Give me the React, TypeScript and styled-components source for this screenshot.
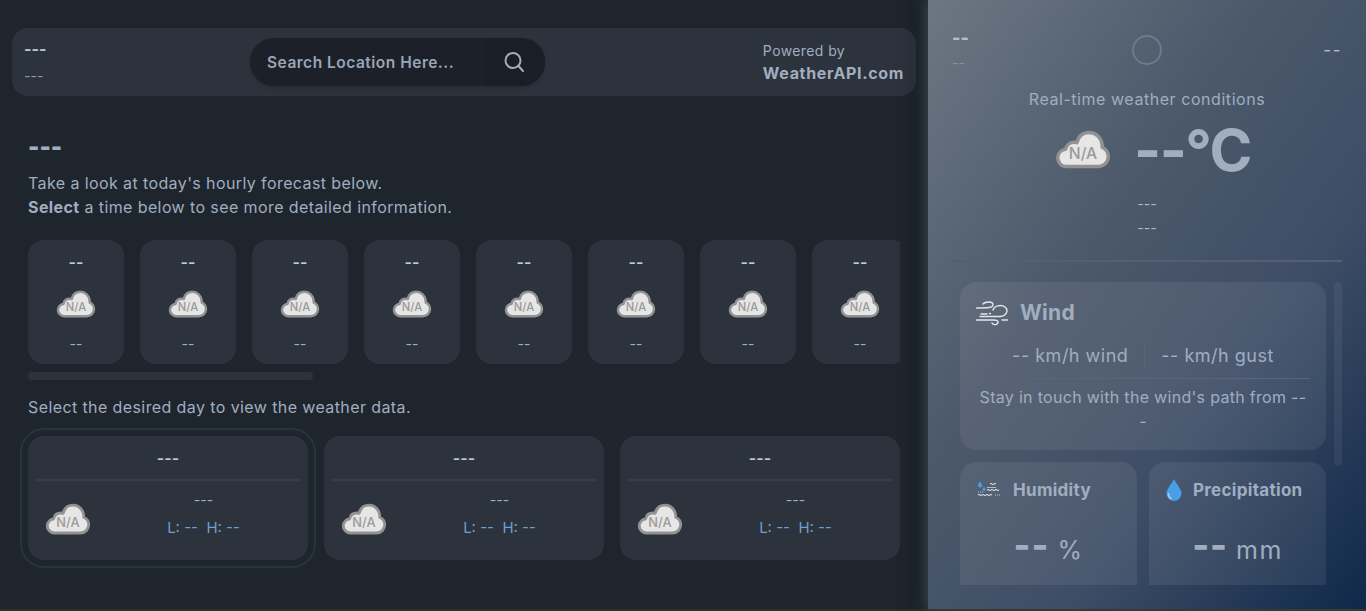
import React from 'react';
import styled, { createGlobalStyle } from 'styled-components';

const Global = createGlobalStyle`
  html, body { margin: 0; padding: 0; height: 100%; background: #273327; overflow: hidden; }
  #root { height: 100%; }
  * { box-sizing: border-box; }
`;

const Page = styled.div`
  display: flex;
  height: 609px;
  font-family: Inter, "Liberation Sans", sans-serif;
  color: #a0aec0;
`;

const Main = styled.main`
  width: 928px;
  flex: none;
  background: #1e252d;
  padding: 28px 12px 0;
`;

const TopBar = styled.header`
  width: 904px;
  height: 68px;
  display: grid;
  grid-template-columns: 226px 295px 1fr;
  align-items: center;
  padding: 0 12px;
  background: #2d333c;
  border-radius: 16px;
`;

const Place = styled.div`
  display: flex;
  flex-direction: column;
  gap: 8px;
`;

const PlaceName = styled.span`
  font-size: 16px;
  line-height: 20px;
  font-weight: 700;
  color: #b9c2d0;
`;

const PlaceSub = styled.span`
  font-size: 14px;
  line-height: 18px;
  color: #8d99aa;
`;

const Search = styled.div`
  height: 48px;
  display: flex;
  background: #1c2129;
  border-radius: 24px;
  overflow: hidden;
  box-shadow: 0 2px 4px rgba(0, 0, 0, 0.15);
`;

const SearchText = styled.span`
  flex: 1;
  display: flex;
  align-items: center;
  padding-left: 17px;
  font-size: 15.5px;
  font-weight: 600;
  letter-spacing: 0.5px;
  color: #9aa6b6;
`;

const SearchButton = styled.span`
  width: 60px;
  display: flex;
  align-items: center;
  justify-content: center;
  padding-right: 2px;
  background: #1a1e26;
  color: #a4adba;
`;

const Powered = styled.div`
  justify-self: end;
  display: flex;
  flex-direction: column;
  font-size: 14px;
  line-height: 22px;
  letter-spacing: 0.4px;
  color: #a0aec0;
`;

const PoweredBrand = styled.strong`
  font-size: 16px;
  font-weight: 700;
  letter-spacing: 0.65px;
`;

const Intro = styled.section`
  padding: 39px 16px 0;
`;

const Headline = styled.h1`
  margin: 0 0 12px;
  height: 24px;
  font-size: 24px;
  line-height: 24px;
  font-weight: 900;
  color: #a0aec0;
`;

const Lead = styled.p`
  margin: 0;
  font-size: 16px;
  line-height: 24px;
  letter-spacing: 0.4px;
  color: #a0aec0;
  b { font-weight: 700; }
`;

const Hours = styled.div`
  display: flex;
  gap: 16px;
  margin-top: 21px;
  width: 872px;
  overflow-x: auto;
  scrollbar-width: none;
`;

const HourThumb = styled.div`
  width: 285px;
  height: 8px;
  margin-top: 8px;
  background: #2d333c;
  border-radius: 4px;
`;

const HourCard = styled.div`
  flex: none;
  width: 96px;
  height: 124px;
  display: flex;
  flex-direction: column;
  align-items: center;
  padding-top: 12px;
  background: #2d333c;
  border-radius: 16px;
`;

const HourTop = styled.span`
  font-size: 16px;
  line-height: 20px;
  font-weight: 600;
  color: #c0c8d4;
`;

const HourIcon = styled.span`
  margin: 18px 0 16px;
  height: 28px;
  display: flex;
`;

const HourBottom = styled.span`
  font-size: 14px;
  line-height: 20px;
  color: #a0aec0;
`;

const DayPrompt = styled.p`
  margin: 15px 0 0;
  font-size: 16px;
  line-height: 24px;
  letter-spacing: 0.4px;
  color: #a0aec0;
`;

const Days = styled.div`
  display: grid;
  grid-template-columns: repeat(3, 280px);
  gap: 16px;
  margin-top: 17px;
`;

const DayCard = styled.div<{ $active?: boolean }>`
  height: 124px;
  padding: 0 8px;
  background: #2d333c;
  border-radius: 16px;
  outline: ${(p) => (p.$active ? '2px solid #2a323d' : 'none')};
  outline-offset: 6px;
`;

const DayName = styled.div`
  height: 45px;
  display: flex;
  align-items: center;
  justify-content: center;
  font-size: 16px;
  font-weight: 600;
  color: #c0c8d4;
  border-bottom: 2px solid #383e47;
`;

const DayBody = styled.div`
  display: flex;
  align-items: center;
  height: 77px;
  padding-left: 9px;
`;

const DayInfo = styled.div`
  flex: 1;
  display: flex;
  flex-direction: column;
  align-items: center;
  padding: 0 6px 12px 22px;
`;

const DayCond = styled.span`
  font-size: 14px;
  line-height: 20px;
  color: #a0aec0;
`;

const HighLow = styled.span`
  margin-top: 8px;
  font-size: 15px;
  line-height: 20px;
  white-space: pre;
  color: #6f9fd0;
`;

const Side = styled.aside`
  position: relative;
  flex: 1;
  padding: 20px 24px 0;
  background: linear-gradient(to bottom right, #6b7782 0%, #4c596b 38%, #3e4d66 66%, #0f2849 100%);
  box-shadow: -2px 0 12px rgba(90, 105, 120, 0.55), -14px 0 18px rgba(0, 0, 0, 0.15);
`;

const SideTop = styled.div`
  display: grid;
  grid-template-columns: 1fr 32px 1fr;
  align-items: center;
  height: 60px;
`;

const ClockCol = styled.div`
  display: flex;
  flex-direction: column;
  gap: 6px;
  align-self: start;
  padding-top: 8px;
`;

const ClockTop = styled.span`
  font-size: 18px;
  line-height: 20px;
  font-weight: 800;
  color: #b4bdcb;
`;

const ClockSub = styled.span`
  font-size: 14px;
  line-height: 18px;
  color: #8894a3;
`;

const Ring = styled.span`
  width: 30px;
  height: 30px;
  justify-self: center;
  border: 2px solid #6c7a8b;
  border-radius: 50%;
`;

const Corner = styled.span`
  justify-self: end;
  font-size: 17px;
  letter-spacing: 1.5px;
  color: #b4bdcb;
`;

const Realtime = styled.p`
  margin: 9px 0 0;
  text-align: center;
  font-size: 16px;
  line-height: 20px;
  letter-spacing: 0.55px;
  color: #a0aec0;
`;

const NowRow = styled.div`
  display: flex;
  align-items: center;
  justify-content: center;
  gap: 23px;
  height: 62px;
  margin-top: 10px;
  padding-left: 12px;
`;

const NowTemp = styled.span`
  font-size: 58px;
  line-height: 62px;
  font-weight: 700;
  letter-spacing: -1.5px;
  color: #a0aec0;
`;

const NowLine = styled.div`
  text-align: center;
  font-size: 14px;
  line-height: 24px;
  color: #b0bac8;
`;

const NowBlock = styled.div`
  margin-top: 11px;
  padding-bottom: 20px;
  border-bottom: 2px solid #535f72;
`;

const DetailsFrame = styled.div`
  position: relative;
  margin-top: 20px;
`;

const Details = styled.div`
  height: 303px;
  padding-left: 8px;
  overflow-y: auto;
  scrollbar-width: none;
`;

const DetailThumb = styled.span`
  position: absolute;
  top: 0;
  right: 0;
  width: 8px;
  height: 184px;
  background: rgba(255, 255, 255, 0.06);
  border-radius: 4px;
`;

const DetailGrid = styled.div`
  display: grid;
  grid-template-columns: 177px 177px;
  gap: 12px;
  width: 366px;
`;

const Card = styled.div<{ $wide?: boolean }>`
  grid-column: ${(p) => (p.$wide ? 'span 2' : 'auto')};
  height: ${(p) => (p.$wide ? '168px' : '153px')};
  padding: ${(p) => (p.$wide ? '16px 16px' : '14px 16px')};
  background: rgba(255, 255, 255, 0.07);
  border-radius: 16px;
`;

const CardHead = styled.div<{ $gap: number }>`
  display: flex;
  align-items: center;
  gap: ${(p) => p.$gap}px;
`;

const WindTitle = styled.h2`
  margin: 0;
  font-size: 21px;
  line-height: 30px;
  font-weight: 700;
  letter-spacing: 0.3px;
  color: #a0aec0;
`;

const SmallTitle = styled.h2`
  margin: 0;
  font-size: 17px;
  line-height: 28px;
  font-weight: 700;
  letter-spacing: 0.3px;
  color: #a0aec0;
`;

const WindStats = styled.div`
  display: flex;
  justify-content: center;
  align-items: center;
  margin-top: 14px;
  padding-bottom: 8px;
  border-bottom: 1px solid #5a6678;
  font-size: 18px;
  letter-spacing: 0.5px;
  color: #a0aec0;
`;

const WindStat = styled.span`
  padding: 0 16px;
  line-height: 28px;
  & + & { border-left: 1px solid #5a6678; }
`;

const WindNote = styled.p`
  margin: 6px 0 0;
  text-align: center;
  font-size: 16px;
  line-height: 24px;
  letter-spacing: 0.3px;
  color: #a0aec0;
`;

const BigValue = styled.div`
  display: flex;
  align-items: center;
  justify-content: center;
  gap: 8px;
  margin-top: 23px;
`;

const BigNumber = styled.span`
  font-size: 36px;
  line-height: 36px;
  font-weight: 800;
  letter-spacing: 1px;
  padding-bottom: 10px;
  color: #a0aec0;
`;

const BigUnit = styled.span`
  font-size: 25px;
  line-height: 36px;
  letter-spacing: 1.5px;
  color: #a0aec0;
`;

const NaCloud = ({ w }: { w: number }) => (
  <svg width={w} height={w * 0.7} viewBox="0 0 64 45" aria-hidden="true">
    <path
      d="M13 42C7 42 3 37 3 32c0-5 4-9 9-10 1-5 5-8 10-8 1 0 2 .2 3 .5C27 7 32 3 39 3c8 0 14 6 15 14 0 1 0 2 0 3 4 1 7 6 7 10 0 7-5 12-12 12Z"
      fill="#e6e6e6"
      stroke="#929292"
      strokeWidth="4"
      strokeLinejoin="round"
    />
    <text x="32" y="33" textAnchor="middle" fontSize="18" fontWeight="500" fontFamily="Inter, sans-serif" fill="#9a9a9a">
      N/A
    </text>
  </svg>
);

const SearchIcon = () => (
  <svg width="22" height="22" viewBox="0 0 22 22" fill="none" stroke="currentColor" strokeWidth="2" strokeLinecap="round">
    <circle cx="10" cy="9.5" r="7.5" />
    <path d="M15.5 15l4.5 5" />
  </svg>
);

const WindIcon = () => (
  <svg width="32" height="25" viewBox="0 0 32 25" fill="none" stroke="#e2e5ea" strokeWidth="1.4" strokeLinecap="round">
    <path d="M7 3C9 .5 17 0 17 3.500S12 7 .5 7" />
    <path d="M5 13h6M13.500 12.500h1" />
    <path d="M17 9c1-4 8-6 12-3s1.500 9-5 9.500H4" />
    <path d="M.5 19h17c4 0 5.500 1.500 4 3.500s-5 1-5.500-.5" />
    <path d="M26 19h5.500" />
  </svg>
);

const HumidityIcon = () => (
  <svg width="25" height="18" viewBox="0 0 25 18" fill="none" stroke="#eef1f4" strokeWidth="1">
    <path d="M4 .5C2.800 2.500 2 3.400 2 4.500a2 2 0 0 0 4 0C6 3.400 5.200 2.500 4 .5Z" fill="#4a9ee6" stroke="none" />
    <path d="M8 5.500C7.200 7 6.500 7.600 6.500 8.500a1.500 1.500 0 0 0 3 0C9.500 7.600 8.800 7 8 5.500Z" fill="#4a9ee6" stroke="none" />
    <path d="M14 3q1-1 2 0t2 0 2 0" />
    <path d="M11 6.500h9" opacity=".6" />
    <path d="M11 9q1-1 2 0t2 0 2 0 2 0 2 0 2 0" />
    <path d="M2 11h6" strokeDasharray="1 1" opacity=".7" />
    <path d="M2 14q1-1 2 0t2 0 2 0 2 0 2 0 2 0 2 0" />
    <path d="M19 14h5" strokeDasharray="1 1" opacity=".7" />
  </svg>
);

const DropIcon = () => (
  <svg width="18" height="24" viewBox="0 0 18 24" aria-hidden="true">
    <path d="M9 1C6 7 1.500 11 1.500 15.500a7.500 7.500 0 0 0 15 0C16.500 11 12 7 9 1Z" fill="#4a9ee6" />
    <path d="M3.500 15.500a5 5 0 0 0 2.500 5" fill="none" stroke="#9fd0f5" strokeWidth="1.500" strokeLinecap="round" />
  </svg>
);

const hours = Array.from({ length: 24 }, (_, i) => i);
const days = [0, 1, 2];

export default function App() {
  return (
    <>
      <Global />
      <Page>
        <Main>
          <TopBar>
            <Place>
              <PlaceName>---</PlaceName>
              <PlaceSub>---</PlaceSub>
            </Place>
            <Search>
              <SearchText>Search Location Here...</SearchText>
              <SearchButton>
                <SearchIcon />
              </SearchButton>
            </Search>
            <Powered>
              <span>Powered by</span>
              <PoweredBrand>WeatherAPI.com</PoweredBrand>
            </Powered>
          </TopBar>
          <Intro>
            <Headline>---</Headline>
            <Lead>Take a look at today's hourly forecast below.</Lead>
            <Lead>
              <b>Select</b> a time below to see more detailed information.
            </Lead>
            <Hours>
              {hours.map((h) => (
                <HourCard key={h}>
                  <HourTop>--</HourTop>
                  <HourIcon>
                    <NaCloud w={40} />
                  </HourIcon>
                  <HourBottom>--</HourBottom>
                </HourCard>
              ))}
            </Hours>
            <HourThumb />
            <DayPrompt>Select the desired day to view the weather data.</DayPrompt>
            <Days>
              {days.map((d) => (
                <DayCard key={d} $active={d === 0}>
                  <DayName>---</DayName>
                  <DayBody>
                    <NaCloud w={46} />
                    <DayInfo>
                      <DayCond>---</DayCond>
                      <HighLow>L: --  H: --</HighLow>
                    </DayInfo>
                  </DayBody>
                </DayCard>
              ))}
            </Days>
          </Intro>
        </Main>
        <Side>
          <SideTop>
            <ClockCol>
              <ClockTop>--</ClockTop>
              <ClockSub>--</ClockSub>
            </ClockCol>
            <Ring />
            <Corner>--</Corner>
          </SideTop>
          <Realtime>Real-time weather conditions</Realtime>
          <NowRow>
            <NaCloud w={56} />
            <NowTemp>--°C</NowTemp>
          </NowRow>
          <NowBlock>
            <NowLine>---</NowLine>
            <NowLine>---</NowLine>
          </NowBlock>
          <DetailsFrame>
            <Details>
              <DetailGrid>
                <Card $wide>
                  <CardHead $gap={12}>
                    <WindIcon />
                    <WindTitle>Wind</WindTitle>
                  </CardHead>
                  <WindStats>
                    <WindStat>-- km/h wind</WindStat>
                    <WindStat>-- km/h gust</WindStat>
                  </WindStats>
                  <WindNote>
                    Stay in touch with the wind's path from --
                    <br />-
                  </WindNote>
                </Card>
                <Card>
                  <CardHead $gap={12}>
                    <HumidityIcon />
                    <SmallTitle>Humidity</SmallTitle>
                  </CardHead>
                  <BigValue>
                    <BigNumber>--</BigNumber>
                    <BigUnit>%</BigUnit>
                  </BigValue>
                </Card>
                <Card>
                  <CardHead $gap={10}>
                    <DropIcon />
                    <SmallTitle>Precipitation</SmallTitle>
                  </CardHead>
                  <BigValue>
                    <BigNumber>--</BigNumber>
                    <BigUnit>mm</BigUnit>
                  </BigValue>
                </Card>
                <Card />
                <Card />
              </DetailGrid>
            </Details>
            <DetailThumb />
          </DetailsFrame>
        </Side>
      </Page>
    </>
  );
}
